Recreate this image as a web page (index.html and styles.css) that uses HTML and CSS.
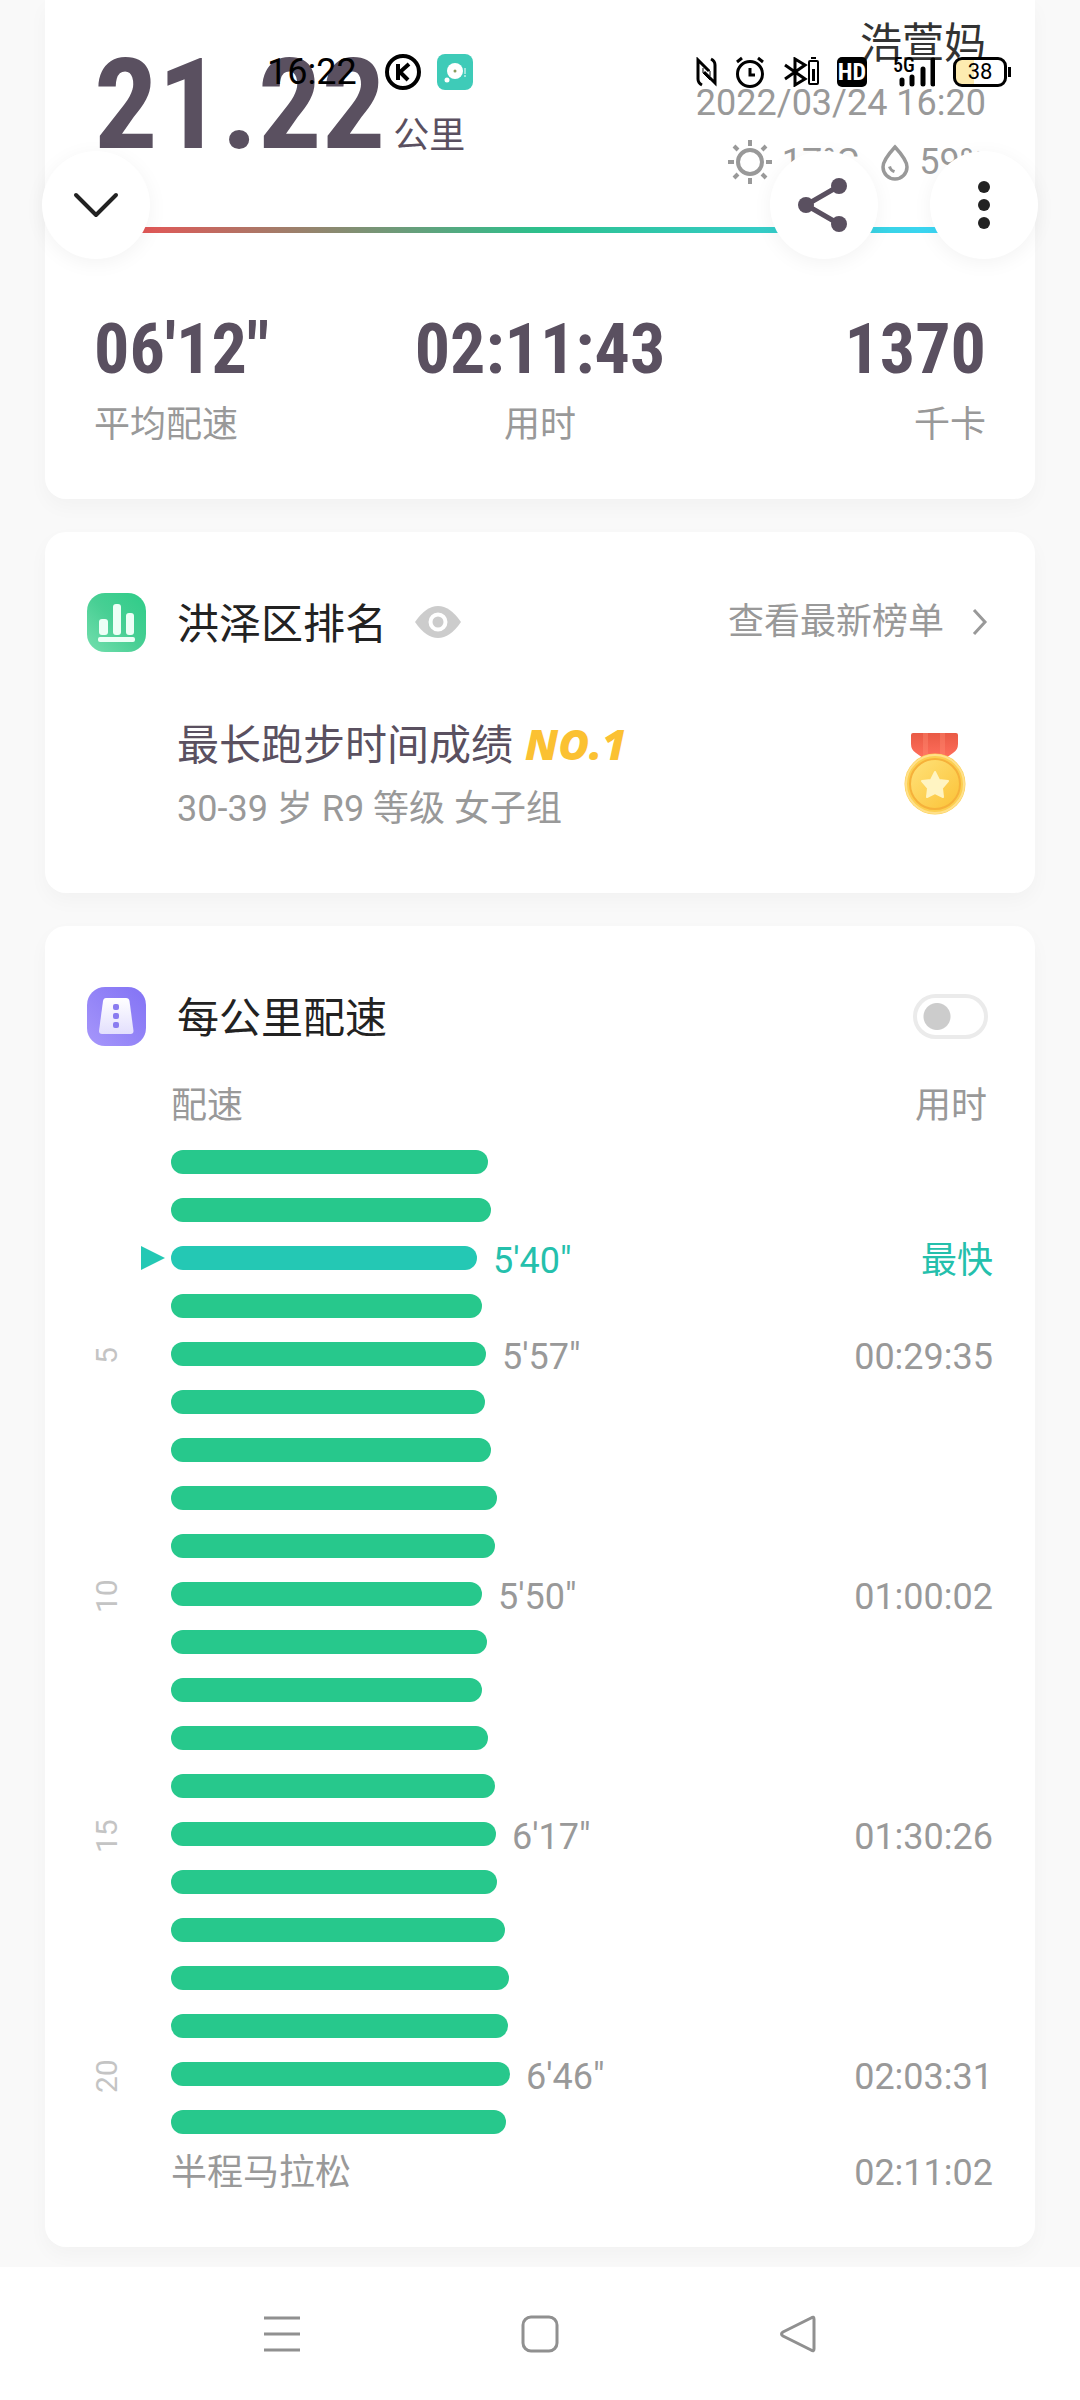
FILE: index.html
```html
<!DOCTYPE html>
<html lang="zh-CN">
<head>
<meta charset="utf-8">
<meta name="viewport" content="width=device-width, initial-scale=1">
<title>跑步记录</title>
<link rel="stylesheet" href="styles.css">
</head>
<body>
<div class="status-bar">
  <div class="status-group">
    <span class="clock">16:22</span>
    <svg class="icon" width="36" height="36" viewBox="0 0 36 36"><circle cx="18" cy="18" r="16" fill="#fff" stroke="#000" stroke-width="4"/><path d="M13 10v16M24 10l-9 8 8 8" fill="none" stroke="#000" stroke-width="4"/></svg>
    <svg class="icon" width="36" height="36" viewBox="0 0 36 36"><rect width="36" height="36" rx="8" fill="#3ecbb8"/><circle cx="18" cy="17" r="8" fill="#fff"/><circle cx="18" cy="17" r="1.5" fill="#8a9a5b"/><circle cx="10" cy="26" r="2.5" fill="#fff"/><path d="M28 14v6M28 21v2" stroke="#fff" stroke-width="1"/></svg>
  </div>
  <div class="status-group status-right">
    <svg class="icon" width="21" height="30" viewBox="0 0 21 30"><path d="M6 28Q2 26 2 22V3l11 11M15 2q4 2 4 6v18L8 15" fill="none" stroke="#000" stroke-width="3"/><path d="M7 11v5l7 7M14 19v-5L7 8" fill="none" stroke="#000" stroke-width="1"/></svg>
    <svg class="icon" width="30" height="32" viewBox="0 0 30 32"><circle cx="15" cy="18" r="12.500" fill="none" stroke="#000" stroke-width="3"/><path d="M15 12v7h5M2 6l5-4M28 6l-5-4" fill="none" stroke="#000" stroke-width="3"/></svg>
    <svg class="icon" width="36" height="30" viewBox="0 0 36 30"><path d="M2 8l20 14-10 6V2l10 6L2 22" fill="none" stroke="#000" stroke-width="3"/><path d="M28 1h5" stroke="#000" stroke-width="2"/><rect x="26" y="4" width="9" height="23" rx="1" fill="#fff" stroke="#000" stroke-width="2"/><path d="M30.500 12v12" stroke="#000" stroke-width="3"/></svg>
    <span class="hd">HD</span>
    <span class="network"><span class="network-type">5G</span><svg class="signal" width="40" height="30" viewBox="0 0 40 30"><path d="M7 23v4M17 20v7M28 12v15M38 3v24" stroke="#000" stroke-width="5" stroke-linecap="round"/></svg></span>
    <span class="battery">38</span>
  </div>
</div>

<div class="floating-bar">
  <button class="round-button" aria-label="收起"><svg width="48" height="48" viewBox="0 0 48 48"><path d="M4 14l20 20 20-20" fill="none" stroke="#222" stroke-width="4" stroke-linecap="round" stroke-linejoin="round"/></svg></button>
  <div class="floating-actions">
    <button class="round-button" aria-label="分享"><svg width="60" height="60" viewBox="0 0 60 60"><path d="M45 11L12 30l33 19" fill="none" stroke="#5a5060" stroke-width="5"/><g fill="#5a5060"><circle cx="12" cy="30" r="8"/><circle cx="45" cy="11" r="8"/><circle cx="45" cy="49" r="8"/></g></svg></button>
    <button class="round-button" aria-label="更多"><svg width="60" height="60" viewBox="0 0 60 60"><g fill="#222"><circle cx="30" cy="12" r="6"/><circle cx="30" cy="30" r="6"/><circle cx="30" cy="48" r="6"/></g></svg></button>
  </div>
</div>

<main class="page">
  <section class="card summary">
    <div class="summary-top">
      <div class="distance"><span class="distance-value">21.22</span><span class="distance-unit">公里</span></div>
      <div class="run-info">
        <div class="runner">浩萱妈</div>
        <div class="run-date">2022/03/24 16:20</div>
        <div class="weather">
          <svg width="44" height="44" viewBox="0 0 44 44"><circle cx="22" cy="22" r="12" fill="none" stroke="#999" stroke-width="4"/><path d="M22 0v6M22 38v6M0 22h6M38 22h6M6 6l4 4M34 34l4 4M6 38l4-4M34 10l4-4" stroke="#999" stroke-width="4"/></svg>
          <span>17°C</span>
          <svg class="drop" width="28" height="38" viewBox="0 0 28 38"><path d="M14 4Q2 17 2 24a12 12 0 0 0 24 0Q26 17 14 4z" fill="none" stroke="#999" stroke-width="3.500"/><path d="M7 24q2 5 6 6l1-3q-3 0-4-4z" fill="#999"/></svg>
          <span>59%</span>
        </div>
      </div>
    </div>
    <div class="pace-line"></div>
    <dl class="metrics">
      <div class="metric"><dd>06'12"</dd><dt>平均配速</dt></div>
      <div class="metric"><dd>02:11:43</dd><dt>用时</dt></div>
      <div class="metric"><dd>1370</dd><dt>千卡</dt></div>
    </dl>
  </section>

  <section class="card ranking">
    <header class="card-head">
      <svg width="59" height="59" viewBox="0 0 59 59"><defs><linearGradient id="g1" x1="0" y1="1" x2="1" y2="0"><stop offset="0" stop-color="#74dfae"/><stop offset=".5" stop-color="#48cf94"/><stop offset="1" stop-color="#2ecc88"/></linearGradient></defs><rect width="59" height="59" rx="18" fill="url(#g1)"/><g fill="#edfff6"><rect x="12" y="26" width="9" height="16" rx="3"/><rect x="26" y="11" width="8" height="31" rx="3"/><rect x="39" y="20" width="8" height="22" rx="3"/><rect x="11" y="44" width="37" height="5" rx="2"/></g></svg>
      <h2>洪泽区排名</h2>
      <button class="eye" aria-label="显示排名"><svg width="46" height="34" viewBox="0 0 46 34"><path d="M0 17Q11 1 23 1t23 16Q35 33 23 33T0 17z" fill="#ccc"/><circle cx="23" cy="17" r="7.500" fill="#ccc" stroke="#fff" stroke-width="4"/></svg></button>
      <a class="more" href="#">查看最新榜单<svg width="16" height="28" viewBox="0 0 16 28"><path d="M2 2l11 12L2 26" fill="none" stroke="#999" stroke-width="3"/></svg></a>
    </header>
    <div class="ranking-body">
      <div>
        <p class="record">最长跑步时间成绩<em>NO.1</em></p>
        <p class="group">30-39 岁 R9 等级 女子组</p>
      </div>
      <svg class="medal" width="62" height="82" viewBox="0 0 62 82"><defs><linearGradient id="m1" x1="0" y1="0" x2="1" y2="1"><stop offset="0" stop-color="#ffe27a"/><stop offset="1" stop-color="#fbc236"/></linearGradient><linearGradient id="m2" x1="0" y1="0" x2="0" y2="1"><stop offset="0" stop-color="#e95a45"/><stop offset="1" stop-color="#ff6e5c"/></linearGradient></defs><path d="M7 2Q7 0 9 0h43q2 0 2 2v9q0 6-5 9l-7 5H19l-7-5q-5-3-5-9z" fill="url(#m2)"/><path d="M19 0h5v24h-5zM36 0h5v24h-5z" fill="#ff8b72" opacity=".4"/><circle cx="31" cy="51" r="30.500" fill="#fccf50"/><circle cx="31" cy="51" r="29" fill="none" stroke="#ffe08a" stroke-width="2"/><circle cx="31" cy="51" r="25" fill="url(#m1)" stroke="#f6b13a" stroke-width="2"/><path d="M31 39l4 8 9 1-6 7 1 9-8-4-8 4 1-9-6-7 9-1z" fill="#fff4c2" stroke="#fff4c2" stroke-width="2" stroke-linejoin="round"/></svg>
    </div>
  </section>

  <section class="card splits">
    <header class="card-head">
      <svg width="59" height="59" viewBox="0 0 59 59"><defs><linearGradient id="p1" x1="0" y1="1" x2="1" y2="0"><stop offset="0" stop-color="#a797fb"/><stop offset=".5" stop-color="#9384f7"/><stop offset="1" stop-color="#8373f5"/></linearGradient><linearGradient id="p2" x1="0" y1="0" x2="0" y2="1"><stop offset="0" stop-color="#fff"/><stop offset="1" stop-color="#e3dffd"/></linearGradient></defs><rect width="59" height="59" rx="18" fill="url(#p1)"/><path d="M19 11h20q3 0 3.500 3l4 30q0 3-3 3H15q-3 0-3-3l4-30q.5-3 3-3z" fill="url(#p2)"/><g fill="#8a7cf0"><rect x="26" y="17" width="6" height="6" rx="2"/><rect x="26" y="26" width="6" height="6" rx="2"/><rect x="26" y="35" width="6" height="6" rx="2"/></g></svg>
      <h2 id="splits-title">每公里配速</h2>
      <input class="switch" type="checkbox" role="switch" aria-labelledby="splits-title">
    </header>
    <table class="split-table">
      <thead><tr><td class="km"></td><th>配速</th><th class="time">用时</th></tr></thead>
      <tbody>
        <tr><td></td><td><div class="pace"><i class="bar" style="width:317px"></i></div></td><td></td></tr>
        <tr><td></td><td><div class="pace"><i class="bar" style="width:320px"></i></div></td><td></td></tr>
        <tr class="fastest"><td><svg class="marker" width="24" height="24" viewBox="0 0 24 24"><path d="M0 0l24 12L0 24z" fill="#24c8b4"/></svg></td><td><div class="pace"><i class="bar" style="width:306px"></i><span>5'40"</span></div></td><td class="time">最快</td></tr>
        <tr><td></td><td><div class="pace"><i class="bar" style="width:311px"></i></div></td><td></td></tr>
        <tr><td><span class="km-label">5</span></td><td><div class="pace"><i class="bar" style="width:315px"></i><span>5'57"</span></div></td><td class="time">00:29:35</td></tr>
        <tr><td></td><td><div class="pace"><i class="bar" style="width:314px"></i></div></td><td></td></tr>
        <tr><td></td><td><div class="pace"><i class="bar" style="width:320px"></i></div></td><td></td></tr>
        <tr><td></td><td><div class="pace"><i class="bar" style="width:326px"></i></div></td><td></td></tr>
        <tr><td></td><td><div class="pace"><i class="bar" style="width:324px"></i></div></td><td></td></tr>
        <tr><td><span class="km-label">10</span></td><td><div class="pace"><i class="bar" style="width:311px"></i><span>5'50"</span></div></td><td class="time">01:00:02</td></tr>
        <tr><td></td><td><div class="pace"><i class="bar" style="width:316px"></i></div></td><td></td></tr>
        <tr><td></td><td><div class="pace"><i class="bar" style="width:311px"></i></div></td><td></td></tr>
        <tr><td></td><td><div class="pace"><i class="bar" style="width:317px"></i></div></td><td></td></tr>
        <tr><td></td><td><div class="pace"><i class="bar" style="width:324px"></i></div></td><td></td></tr>
        <tr><td><span class="km-label">15</span></td><td><div class="pace"><i class="bar" style="width:325px"></i><span>6'17"</span></div></td><td class="time">01:30:26</td></tr>
        <tr><td></td><td><div class="pace"><i class="bar" style="width:326px"></i></div></td><td></td></tr>
        <tr><td></td><td><div class="pace"><i class="bar" style="width:334px"></i></div></td><td></td></tr>
        <tr><td></td><td><div class="pace"><i class="bar" style="width:338px"></i></div></td><td></td></tr>
        <tr><td></td><td><div class="pace"><i class="bar" style="width:337px"></i></div></td><td></td></tr>
        <tr><td><span class="km-label">20</span></td><td><div class="pace"><i class="bar" style="width:339px"></i><span>6'46"</span></div></td><td class="time">02:03:31</td></tr>
        <tr><td></td><td><div class="pace"><i class="bar" style="width:335px"></i></div></td><td></td></tr>
        <tr><td></td><td><div class="pace"><span>半程马拉松</span></div></td><td class="time">02:11:02</td></tr>
      </tbody>
    </table>
  </section>
</main>

<nav class="system-nav">
  <button aria-label="最近任务"><svg width="40" height="40" viewBox="0 0 40 40"><path d="M2 4h36M2 20h36M2 36h36" stroke="#909090" stroke-width="3"/></svg></button>
  <button aria-label="主屏幕"><svg width="40" height="40" viewBox="0 0 40 40"><rect x="3" y="3" width="34" height="34" rx="8" fill="none" stroke="#909090" stroke-width="3"/></svg></button>
  <button aria-label="返回"><svg width="40" height="40" viewBox="0 0 40 40"><path d="M36 5v30q0 3-3 1L5 22q-3-2 0-4L33 4q3-2 3 1z" fill="none" stroke="#909090" stroke-width="3"/></svg></button>
</nav>
</body>
</html>
```
FILE: styles.css
```css
* {
  box-sizing: border-box;
}

body {
  position: relative;
  display: flex;
  flex-direction: column;
  min-height: 100vh;
  margin: 0;
  background: #f9f9f9;
  color: #999;
  font: 400 36px/44px Roboto, "Noto Sans CJK SC", sans-serif;
}

h2, p, dl, dd {
  margin: 0;
}

svg {
  display: block;
  flex: none;
}

button {
  display: flex;
  align-items: center;
  justify-content: center;
  padding: 0;
  border: 0;
  background: none;
}

a {
  color: inherit;
  text-decoration: none;
}

/* System status bar, drawn over the page */
.status-bar {
  position: absolute;
  z-index: 3;
  top: 50px;
  right: 73px;
  left: 267px;
  display: flex;
  justify-content: space-between;
  height: 44px;
  color: #000;
}

.status-group {
  display: flex;
  align-items: center;
  gap: 16px;
}

.status-right {
  gap: 18px;
}

.clock {
  margin-right: 12px;
}

.hd {
  width: 30px;
  height: 30px;
  border-radius: 5px;
  background: #000;
  color: #fff;
  font: 700 24px/30px "Roboto Condensed", Roboto, sans-serif;
  text-align: center;
}

.network {
  position: relative;
  margin-left: 10px;
}

.network-type {
  position: absolute;
  top: -2px;
  left: -2px;
  font: 500 20px/20px "Roboto Condensed", Roboto, sans-serif;
}

.battery {
  position: relative;
  width: 54px;
  height: 30px;
  border: 3px solid #000;
  border-radius: 9px;
  background: linear-gradient(90deg, #fdebb0 38%, #fff 38%);
  font: 400 22px/24px Roboto, sans-serif;
  text-align: center;
}

.battery::after {
  position: absolute;
  top: 7px;
  right: -7px;
  width: 3px;
  height: 10px;
  background: #000;
  content: "";
}

/* Floating round controls */
.floating-bar {
  position: absolute;
  z-index: 2;
  top: 151px;
  right: 42px;
  left: 42px;
  display: flex;
  justify-content: space-between;
}

.floating-actions {
  display: flex;
  gap: 52px;
}

.round-button {
  width: 108px;
  height: 108px;
  border-radius: 50%;
  background: #fff;
  box-shadow: 0 4px 20px rgba(0, 0, 0, 0.05);
}

.page {
  display: flex;
  flex: 1;
  flex-direction: column;
  gap: 33px;
  padding: 0 45px 19px;
}

.card {
  padding: 60px 47px 60px 42px;
  border-radius: 21px;
  background: #fff;
  box-shadow: 0 8px 20px rgba(0, 0, 0, 0.03);
}

/* Summary */
.summary {
  padding: 18px 49px 52px;
  border-radius: 0 0 21px 21px;
}

.summary-top {
  display: flex;
  justify-content: space-between;
}

.distance {
  display: flex;
  align-items: baseline;
  gap: 8px;
  padding-top: 21px;
  color: #5a5060;
}

.distance-value {
  font: 700 126px/132px "Roboto Condensed", Roboto, sans-serif;
}

.run-info {
  display: flex;
  flex-direction: column;
  align-items: flex-end;
  gap: 13px;
  line-height: 40px;
}

.runner {
  color: #333;
  font-size: 42px;
  line-height: 52px;
}

.weather {
  display: flex;
  align-items: center;
  gap: 10px;
  line-height: 52px;
}

.drop {
  margin-left: 12px;
}

.pace-line {
  height: 6px;
  margin-top: 39px;
  background: linear-gradient(90deg, #e45656 5%, #2cc08c 50%, #3bd6f5 95%);
}

.metrics {
  display: grid;
  grid-template-columns: 1fr auto 1fr;
  margin-top: 78px;
}

.metric {
  text-align: center;
}

.metric:first-child {
  text-align: left;
}

.metric:last-child {
  text-align: right;
}

.metric dd {
  margin-bottom: 16px;
  color: #5a5060;
  font: 700 70px/76px "Roboto Condensed", Roboto, sans-serif;
}

/* Card headings */
.card-head {
  display: flex;
  align-items: center;
  height: 60px;
}

.card-head h2 {
  margin-left: 31px;
  padding-top: 6px;
  color: #222;
  font-size: 42px;
  font-weight: 400;
  line-height: 60px;
}

.eye {
  margin-left: 28px;
}

.more {
  display: flex;
  align-items: center;
  gap: 28px;
  margin-left: auto;
}

/* Ranking */
.ranking-body {
  display: flex;
  align-items: center;
  justify-content: space-between;
  margin-top: 62px;
  padding: 0 22px 0 90px;
}

.record {
  color: #5a5060;
  font-size: 42px;
  line-height: 60px;
}

.record em {
  margin-left: 12px;
  color: #fbc132;
  font-family: "Open Sans", sans-serif;
  font-weight: 800;
}

.group {
  margin-top: 9px;
  line-height: 48px;
}

/* Splits */
.splits {
  padding-bottom: 53px;
}

.switch {
  width: 75px;
  height: 45px;
  margin: 0 0 0 auto;
  border: 4px solid #ebebeb;
  border-radius: 23px;
  appearance: none;
  background: radial-gradient(circle at 20px 50%, #ccc 13px, transparent 14px);
}

.split-table {
  width: calc(100% + 5px);
  margin-top: 36px;
  border-collapse: collapse;
  table-layout: fixed;
}

.split-table td,
.split-table th {
  height: 48px;
  padding: 0;
  font-weight: 400;
  line-height: 48px;
  text-align: left;
  vertical-align: middle;
}

.split-table thead td,
.split-table thead th {
  height: 56px;
  padding-bottom: 8px;
}

.split-table .km {
  width: 84px;
}

.split-table .time {
  width: 200px;
  text-align: right;
}

.split-table tbody .time {
  padding-top: 6px;
  line-height: 42px;
}

.split-table thead .time {
  padding-right: 6px;
}

.km-label {
  display: block;
  width: 40px;
  height: 48px;
  padding-bottom: 4px;
  color: #c4c4c4;
  font-size: 30px;
  line-height: 40px;
  text-align: center;
  writing-mode: vertical-rl;
  transform: rotate(180deg);
}

.marker {
  margin-left: 54px;
}

.pace {
  display: flex;
  align-items: center;
  gap: 16px;
  height: 48px;
}

.pace span {
  padding-top: 6px;
  line-height: 42px;
}

.bar {
  flex: none;
  height: 24px;
  border-radius: 12px;
  background: #27c88c;
}

.fastest {
  color: #24c0ac;
}

.fastest .bar {
  background: #24c8b4;
}

/* System navigation */
.system-nav {
  display: grid;
  grid-template-columns: repeat(3, 258px);
  justify-content: center;
  height: 133px;
  background: #fff;
}
```
